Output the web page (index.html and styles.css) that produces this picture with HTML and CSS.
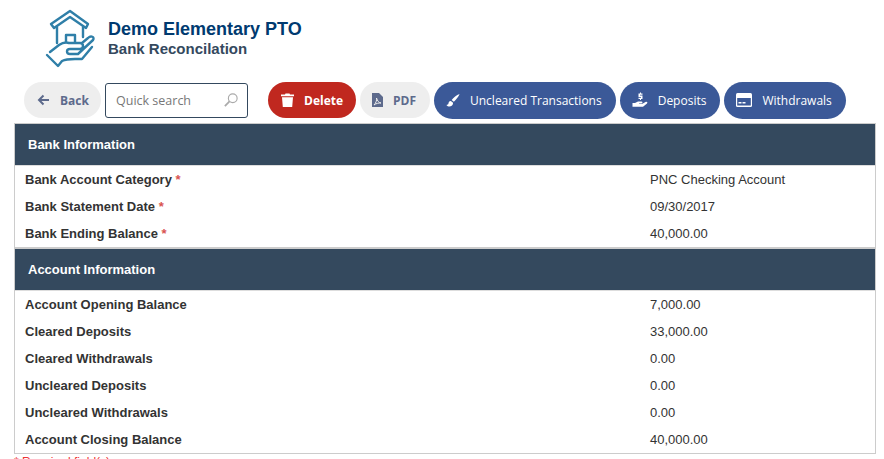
FILE: index.html
```html
<!DOCTYPE html>
<html lang="en">
<head>
    <meta charset="UTF-8">
    <title>Bank Reconcilation</title>
    <link rel="stylesheet" href="styles.css">
</head>
<body>
    <div class="page-header">
        <svg class="logo" viewBox="44 8 54 64" fill="none" stroke="#2f7fa8" stroke-width="2.4" stroke-linecap="round" stroke-linejoin="round">
            <path d="M51 25 L70 12 L88 25 L86 29 L70 18 L54 29 Z"/>
            <path d="M57 28 V44 M83 28 V38"/>
            <path d="M66 43 V36 H75 V43"/>
            <path d="M50 53 L59 46 C62 44 66 43 69 44 L80 44 C84 44 84 50 80 50 L70 50 C66 50 66 55 70 55 L78 55 L93 41 C95 38 91 36 88 39 L82 44"/>
            <path d="M47 56 L58 67 L62 62 C66 60 70 60 75 60 L82 60 L92 48"/>
        </svg>
        <div class="titles">
            <div class="org-name">Demo Elementary PTO</div>
            <div class="page-name">Bank Reconcilation</div>
        </div>
    </div>

    <div class="toolbar">
        <a class="btn btn-grey btn-back">
            <svg class="ico ico-arrow" viewBox="0 0 12 12" fill="none" stroke="currentColor" stroke-width="2"><path d="M12 6 H2 M6.5 1.5 L2 6 L6.5 10.5"/></svg>
            Back
        </a>
        <div class="search">
            <span>Quick search</span>
            <svg class="search-ico" viewBox="0 0 16 16" fill="none" stroke="#aaa" stroke-width="1.3"><circle cx="10" cy="6" r="5"/><path d="M6.3 9.7 L1 15" stroke-width="2"/></svg>
        </div>
        <a class="btn btn-red">
            <svg class="ico ico-trash" viewBox="0 0 13 14" fill="#fff"><path d="M0 1.5 H4 L4.5 .5 H8.5 L9 1.5 H13 V3.2 H0 Z M1 4.2 H12 L11.2 14 H1.8 Z"/></svg>
            Delete
        </a>
        <a class="btn btn-grey btn-pdf">
            <svg class="ico ico-pdf" viewBox="0 0 11 14"><path fill="#5d6a8c" d="M0 0 H7 L11 4 V14 H0 Z"/><path fill="none" stroke="#eee" stroke-width="1" d="M2 12 C4 10 5 7 4.5 5 C5.5 8 6.5 9.5 9 10 C6.5 9.8 4 10.5 2 12 Z"/></svg>
            PDF
        </a>
        <a class="btn btn-blue">
            <svg class="ico ico-brush" viewBox="0 0 16 16" fill="#fff"><path d="M15.5 .5 C12 1.5 8.5 4.5 6.5 7.5 L9 9.5 C11.5 7 14.5 3.5 15.5 .5 Z M5.5 8.5 C3.5 8.5 3 10 2.8 11.5 C2.6 12.8 1.5 13 .5 13 C2 15 4.5 15.5 6.5 14 C8 13 8.3 11 7.8 10.3 Z"/></svg>
            Uncleared Transactions
        </a>
        <a class="btn btn-blue">
            <svg class="ico" viewBox="0 0 16 16" fill="#fff"><path d="M.5 11 H3 L6 9.5 H9.5 C10.8 9.5 10.8 11.5 9.5 11.5 H7 V12 H10 L13.5 10 C15 9.3 16 10.5 15 11.5 L11 14.8 H.5 Z"/><path d="M8 .5 H9 V1.5 H10.5 V2.7 H8 V3.5 H10.5 V7 H9 V8 H8 V7 H6.5 V5.8 H9 V5 H6.5 V1.5 H8 Z"/></svg>
            Deposits
        </a>
        <a class="btn btn-blue">
            <svg class="ico" viewBox="0 0 16 14"><rect width="16" height="14" rx="1.5" fill="#fff"/><rect x="1.2" y="5" width="13.6" height="7.5" fill="#3b5998"/><rect x="2.5" y="9" width="3" height="1.5" fill="#fff"/><rect x="6.5" y="9" width="3" height="1.5" fill="#fff"/></svg>
            Withdrawals
        </a>
    </div>

    <div class="panel">
        <div class="section-head">Bank Information</div>
        <div class="rows">
            <div class="row"><label>Bank Account Category <i>*</i></label><span>PNC Checking Account</span></div>
            <div class="row"><label>Bank Statement Date <i>*</i></label><span>09/30/2017</span></div>
            <div class="row"><label>Bank Ending Balance <i>*</i></label><span>40,000.00</span></div>
        </div>
        <div class="section-head section-second">Account Information</div>
        <div class="rows">
            <div class="row"><label>Account Opening Balance</label><span>7,000.00</span></div>
            <div class="row"><label>Cleared Deposits</label><span>33,000.00</span></div>
            <div class="row"><label>Cleared Withdrawals</label><span>0.00</span></div>
            <div class="row"><label>Uncleared Deposits</label><span>0.00</span></div>
            <div class="row"><label>Uncleared Withdrawals</label><span>0.00</span></div>
            <div class="row"><label>Account Closing Balance</label><span>40,000.00</span></div>
        </div>
    </div>
    <div class="required-note">* Required field(s)</div>
</body>
</html>
```

FILE: styles.css
```css
html {
    height: 459px;
    overflow: hidden;
}
body {
    margin: 0;
    height: 459px;
    overflow: hidden;
    background: #fff;
    font-family: "Liberation Sans", Arial, sans-serif;
    font-size: 14px;
    color: #333;
}
.page-header {
    display: flex;
    align-items: center;
    height: 81px;
    padding: 0 0 0 44px;
    box-sizing: border-box;
}
.logo {
    flex: none;
    width: 54px;
    height: 64px;
    margin: -3px 10px 0 0;
}
.titles {
    margin-top: -4px;
}
.org-name {
    font-size: 18px;
    font-weight: bold;
    color: #003a70;
    line-height: 21px;
}
.page-name {
    font-size: 15px;
    font-weight: bold;
    color: #34495e;
    line-height: 18px;
}
.toolbar {
    display: flex;
    align-items: center;
    height: 38px;
    padding-left: 24px;
}
.btn {
    display: flex;
    align-items: center;
    height: 37px;
    box-sizing: border-box;
    border-radius: 19px;
    padding: 0 14px 0 12px;
    font-family: "Open Sans", sans-serif;
    font-size: 12px;
    white-space: nowrap;
}
.ico {
    flex: none;
    width: 16px;
    height: 16px;
    margin-right: 10px;
}
.ico-arrow {
    width: 12px;
    height: 12px;
    margin-right: 11px;
}
.ico-trash {
    width: 13px;
    height: 14px;
}
.ico-pdf {
    width: 11px;
    height: 14px;
}
.ico-brush {
    width: 14px;
    height: 15px;
}
.btn-grey {
    height: 36px;
    background: #eee;
    color: #5d6a8c;
    font-weight: bold;
}
.btn-back {
    width: 77px;
    padding-left: 13px;
}
.btn-pdf {
    width: 70px;
    margin-left: 4px;
}
.btn-red {
    width: 88px;
    height: 36px;
    padding-left: 13px;
    background: #c0281f;
    color: #fff;
    font-weight: bold;
}
.btn-blue {
    background: #3b5998;
    color: #fff;
    margin-left: 4px;
}
.search {
    display: flex;
    align-items: center;
    justify-content: space-between;
    width: 143px;
    height: 35px;
    box-sizing: border-box;
    margin: 0 20px 0 4px;
    padding: 0 9px 0 10px;
    border: 1px solid #34495e;
    border-radius: 3px;
    font-family: "Open Sans", sans-serif;
    font-size: 12.5px;
    color: #777;
}
.search-ico {
    width: 14px;
    height: 14px;
}
.panel {
    margin: 4px 8px 0 14px;
    border: 1px solid #ccc;
    border-top: 0;
}
.section-head {
    height: 43px;
    line-height: 41px;
    padding-left: 13px;
    background: #34495e;
    color: #fff;
    font-size: 13px;
    font-weight: bold;
    border-top: 1px solid #ccc;
    border-bottom: 1px solid #ddd;
    box-sizing: border-box;
}
.section-second {
    height: 44px;
    border-top: 2px solid #ccc;
}
.row {
    display: flex;
    height: 27px;
    line-height: 28px;
    font-size: 13px;
}
.row label {
    width: 625px;
    padding-left: 10px;
    font-weight: bold;
    flex: none;
}
.row i {
    color: #d9534f;
    font-style: normal;
}
.required-note {
    font-size: 12px;
    color: #e33;
    margin: 1px 0 0 14px;
    line-height: 14px;
}
```
